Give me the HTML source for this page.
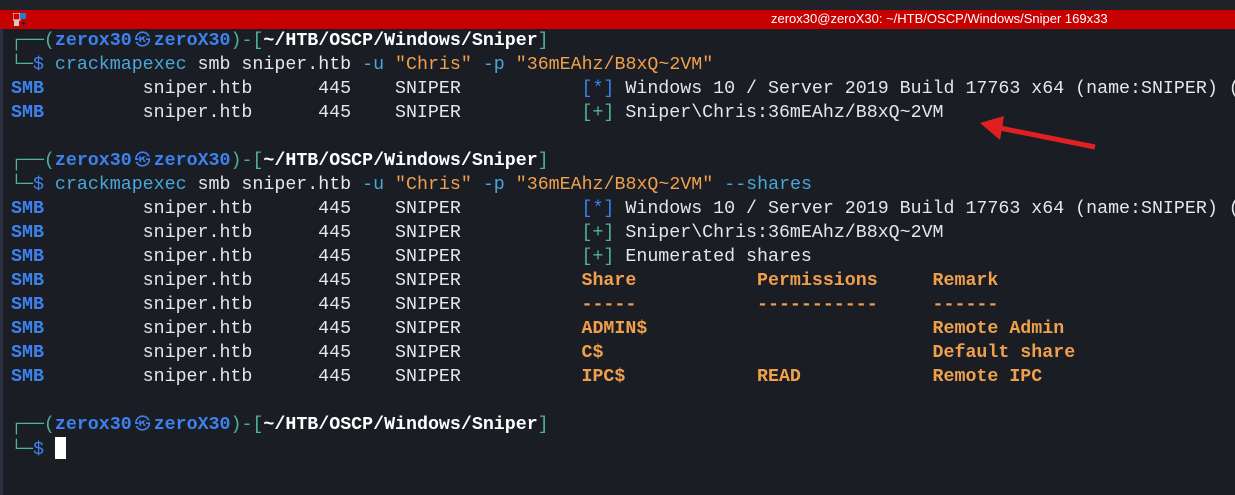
<!DOCTYPE html>
<html><head><meta charset="utf-8"><style>
html,body{margin:0;padding:0;width:1235px;height:495px;overflow:hidden;background:#1b1d25;}
.top{position:absolute;left:0;top:0;width:1235px;height:10px;background:#1f2228;border-bottom:1px solid #3a3d44;}
.bar{position:absolute;left:0;top:10px;width:1235px;height:19px;background:#c70000;}
.bar .t{position:absolute;left:771px;top:1px;font:13px "Liberation Sans",sans-serif;color:#fff;}
.left{position:absolute;left:0;top:29px;width:3px;height:466px;background:#2b3140;}
pre{position:absolute;left:11px;top:29px;margin:0;font-family:"Liberation Mono","DejaVu Sans Mono","Noto Sans CJK SC",monospace;font-size:18.3px;line-height:24px;color:#e6e6e6;}
.g{color:#4fb39a}.b{color:#3d82ee;font-weight:bold}.c{color:#47a7d8}.o{color:#f0a04a}.O{color:#f0a04a;font-weight:bold}.w{font-weight:bold;color:#fff}.s{color:#3d82ee}
.k{display:inline-block;width:22px;text-align:center;font-size:16px}
.cur{display:inline-block;width:11px;height:22px;background:#fff;vertical-align:-5px}
</style></head><body>
<div class="top"></div>
<div class="bar"><svg style="position:absolute;left:13px;top:3px" width="14" height="14"><rect x="0" y="0" width="7" height="7" fill="#c70000" stroke="#fff" stroke-width="1"/><rect x="7" y="0" width="6" height="6" fill="#1e7fd8"/><rect x="1" y="7" width="5" height="6" fill="#ccc"/><path d="M8 9h5l-2.5 3z" fill="#222"/></svg><span class="t">zerox30@zeroX30: ~/HTB/OSCP/Windows/Sniper 169x33</span></div>
<div class="left"></div>
<pre><span class="g">┌──(</span><span class="b">zerox30<span class="k">㉿</span>zeroX30</span><span class="g">)-[</span><span class="w">~/HTB/OSCP/Windows/Sniper</span><span class="g">]</span>
<span class="g">└─</span><span class="s">$</span> <span class="c">crackmapexec</span> smb sniper.htb <span class="c">-u</span> <span class="o">"Chris"</span> <span class="c">-p</span> <span class="o">"36mEAhz/B8xQ~2VM"</span>
<span class="b">SMB</span>         sniper.htb      445    SNIPER           <span class="s">[*]</span> Windows 10 / Server 2019 Build 17763 x64 (name:SNIPER) (
<span class="b">SMB</span>         sniper.htb      445    SNIPER           <span class="g">[+]</span> Sniper\Chris:36mEAhz/B8xQ~2VM

<span class="g">┌──(</span><span class="b">zerox30<span class="k">㉿</span>zeroX30</span><span class="g">)-[</span><span class="w">~/HTB/OSCP/Windows/Sniper</span><span class="g">]</span>
<span class="g">└─</span><span class="s">$</span> <span class="c">crackmapexec</span> smb sniper.htb <span class="c">-u</span> <span class="o">"Chris"</span> <span class="c">-p</span> <span class="o">"36mEAhz/B8xQ~2VM"</span> <span class="c">--shares</span>
<span class="b">SMB</span>         sniper.htb      445    SNIPER           <span class="s">[*]</span> Windows 10 / Server 2019 Build 17763 x64 (name:SNIPER) (
<span class="b">SMB</span>         sniper.htb      445    SNIPER           <span class="g">[+]</span> Sniper\Chris:36mEAhz/B8xQ~2VM
<span class="b">SMB</span>         sniper.htb      445    SNIPER           <span class="g">[+]</span> Enumerated shares
<span class="b">SMB</span>         sniper.htb      445    SNIPER           <span class="O">Share           Permissions     Remark</span>
<span class="b">SMB</span>         sniper.htb      445    SNIPER           <span class="O">-----           -----------     ------</span>
<span class="b">SMB</span>         sniper.htb      445    SNIPER           <span class="O">ADMIN$                          Remote Admin</span>
<span class="b">SMB</span>         sniper.htb      445    SNIPER           <span class="O">C$                              Default share</span>
<span class="b">SMB</span>         sniper.htb      445    SNIPER           <span class="O">IPC$            READ            Remote IPC</span>

<span class="g">┌──(</span><span class="b">zerox30<span class="k">㉿</span>zeroX30</span><span class="g">)-[</span><span class="w">~/HTB/OSCP/Windows/Sniper</span><span class="g">]</span>
<span class="g">└─</span><span class="s">$</span> <span class="cur"></span></pre>
<svg style="position:absolute;left:0;top:0" width="1235" height="495"><line x1="1095" y1="147" x2="1000" y2="128" stroke="#e02020" stroke-width="5"/><polygon points="980,123 1004,116 1000,140" fill="#e02020"/></svg>
</body></html>
